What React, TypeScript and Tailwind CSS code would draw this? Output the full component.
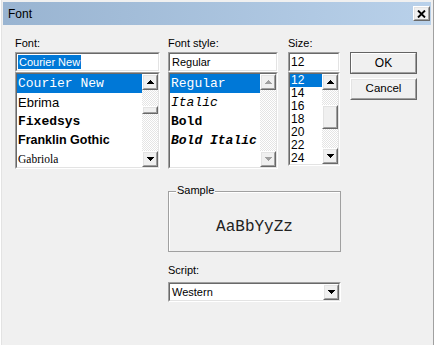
import React from 'react';

const sans = "[font-family:'Liberation_Sans',Arial,sans-serif]";
const mono = "[font-family:'Liberation_Mono','Courier_New',monospace]";

const Sunken = ({ className = '', inner = '', children }: { className?: string; inner?: string; children?: React.ReactNode }) => (
    <div className={`border border-t-[#a0a0a0] border-l-[#a0a0a0] border-b-white border-r-white ${className}`}>
        <div className={`h-full border border-t-[#696969] border-l-[#696969] border-b-[#e3e3e3] border-r-[#e3e3e3] bg-white ${inner}`}>
            {children}
        </div>
    </div>
);

const Raised = ({ className = '', children }: { className?: string; children?: React.ReactNode }) => (
    <div className={`border border-t-white border-l-white border-b-[#696969] border-r-[#696969] bg-[#f0f0f0] ${className}`}>
        <div className="flex h-full w-full items-center justify-center border border-t-[#e3e3e3] border-l-[#e3e3e3] border-b-[#a0a0a0] border-r-[#a0a0a0]">
            {children}
        </div>
    </div>
);

const Arrow = ({ dir, disabled }: { dir: 'up' | 'down'; disabled?: boolean }) => {
    const d = dir === 'up'
        ? 'M3 0h1v1h-1z M2 1h3v1h-3z M1 2h5v1h-5z M0 3h7v1h-7z'
        : 'M0 0h7v1h-7z M1 1h5v1h-5z M2 2h3v1h-3z M3 3h1v1h-1z';
    return (
        <svg width="7" height="4" viewBox="0 0 7 4" shapeRendering="crispEdges">
            <path d={d} fill={disabled ? '#a0a0a0' : '#000'} />
        </svg>
    );
};

const ScrollBar = ({ thumbTop, thumbHeight, disabled }: { thumbTop?: number; thumbHeight?: number; disabled?: boolean }) => (
    <div className="flex h-full w-[16px] shrink-0 flex-col">
        <Raised className="h-[16px] w-[16px] shrink-0"><Arrow dir="up" disabled={disabled} /></Raised>
        <div className="relative flex-1 bg-[repeating-conic-gradient(#ffffff_0_25%,#e4e4e4_0_50%)] bg-[length:2px_2px]">
            {thumbHeight ? (
                <div className="absolute left-0 w-[16px]" style={{ top: thumbTop, height: thumbHeight }}>
                    <Raised className="h-full w-full" />
                </div>
            ) : null}
        </div>
        <Raised className="h-[16px] w-[16px] shrink-0"><Arrow dir="down" disabled={disabled} /></Raised>
    </div>
);

export default function App() {
    return (
        <div className={`relative flex h-[345px] w-[434px] flex-col overflow-hidden bg-[#f0f0f0] text-black ${sans} shadow-[inset_1px_0_0_#ffffff,inset_2px_0_0_#e3e3e3,inset_-1px_0_0_#a0a0a0]`}>
            {/* title bar */}
            <div className="mx-[3px] mt-[2px] flex h-[23px] shrink-0 items-center justify-between bg-gradient-to-r from-[#99b4d1] to-[#b9d1ea] pl-[5px] pr-[1px]">
                <span className="text-[12px] leading-none">Font</span>
                <Raised className="h-[15px] w-[17px]">
                    <svg width="9" height="8" viewBox="0 0 9 8">
                        <path d="M1 0.5 L8 7.5 M8 0.5 L1 7.5" stroke="#000" strokeWidth="1.9" />
                    </svg>
                </Raised>
            </div>

            <div className="flex pl-[15px] pt-[12px] text-[11px]">
                {/* Font */}
                <div className="flex w-[145px] flex-col">
                    <div className="mb-[2px] h-[13px] leading-[13px]">Font:</div>
                    <Sunken className="h-[20px]" inner="flex items-center pl-[1px]">
                        <span className="bg-[#0078d7] px-[1px] leading-[14px] text-white">Courier New</span>
                    </Sunken>
                    <Sunken className="h-[97px]" inner="flex">
                        <div className="flex-1 overflow-hidden">
                            <div className={`flex h-[19px] items-center bg-[#0078d7] pl-[1px] text-[13px] text-white ${mono}`}>Courier New</div>
                            <div className="flex h-[19px] items-center pl-[1px] text-[13px]">Ebrima</div>
                            <div className={`flex h-[19px] items-center pl-[1px] text-[13px] font-bold ${mono}`}>Fixedsys</div>
                            <div className="flex h-[19px] items-center pl-[1px] text-[12.5px] font-bold">Franklin Gothic</div>
                            <div className="flex h-[19px] items-center pl-[1px] text-[11.5px] [font-family:'Liberation_Serif',serif]">Gabriola</div>
                        </div>
                        <ScrollBar thumbTop={16} thumbHeight={8} />
                    </Sunken>
                </div>

                {/* Font style */}
                <div className="ml-[8px] flex w-[110px] flex-col">
                    <div className="mb-[2px] h-[13px] leading-[13px]">Font style:</div>
                    <Sunken className="h-[20px]" inner="flex items-center pl-[2px]">
                        <span className="leading-[14px]">Regular</span>
                    </Sunken>
                    <Sunken className="h-[97px]" inner="flex">
                        <div className={`flex-1 overflow-hidden text-[13px] ${mono}`}>
                            <div className="flex h-[19px] items-center bg-[#0078d7] pl-[1px] text-white">Regular</div>
                            <div className="flex h-[19px] items-center pl-[1px] italic">Italic</div>
                            <div className="flex h-[19px] items-center pl-[1px] font-bold">Bold</div>
                            <div className="flex h-[19px] items-center pl-[1px] font-bold italic">Bold Italic</div>
                        </div>
                        <ScrollBar disabled />
                    </Sunken>
                </div>

                {/* Size */}
                <div className="ml-[10px] flex w-[52px] flex-col">
                    <div className="mb-[2px] h-[13px] leading-[13px]">Size:</div>
                    <Sunken className="h-[20px]" inner="flex items-center pl-[1px]">
                        <span className="text-[12px] leading-[14px]">12</span>
                    </Sunken>
                    <Sunken className="h-[94px]" inner="flex">
                        <div className="flex-1 overflow-hidden text-[12px] leading-[13px]">
                            <div className="h-[13px] bg-[#0078d7] pl-[1px] text-white">12</div>
                            {['14', '16', '18', '20', '22', '24'].map((s) => (
                                <div key={s} className="h-[13px] pl-[1px]">{s}</div>
                            ))}
                        </div>
                        <ScrollBar thumbTop={15} thumbHeight={24} />
                    </Sunken>
                </div>

                {/* Buttons */}
                <div className="ml-[10px] flex w-[67px] flex-col pt-[15px]">
                    <div className="h-[22px] border border-[#646464]">
                        <div className="flex h-full items-center justify-center border border-t-white border-l-white border-b-[#a0a0a0] border-r-[#a0a0a0] text-[12px]">
                            OK
                        </div>
                    </div>
                    <Raised className="mt-[4px] h-[22px]">
                        <span className="text-[11.5px]">Cancel</span>
                    </Raised>
                </div>
            </div>

            {/* Sample + Script */}
            <div className="ml-[168px] mt-[22px] flex w-[173px] flex-col text-[11px]">
                <div className="relative h-[61px] border border-[#a0a0a0] shadow-[inset_1px_1px_0_#ffffff]">
                    <span className="absolute left-[7px] top-[-8px] bg-[#f0f0f0] px-[1px] leading-[13px]">Sample</span>
                    <div className={`flex justify-center pt-[26px] text-[16px] leading-[18px] text-[#222] ${mono}`}>AaBbYyZz</div>
                </div>
                <div className="mb-[5px] mt-[12px] h-[13px] leading-[13px]">Script:</div>
                <Sunken className="h-[20px]" inner="flex items-center justify-between pl-[2px]">
                    <span className="leading-[14px]">Western</span>
                    <Raised className="h-[16px] w-[16px]"><Arrow dir="down" /></Raised>
                </Sunken>
            </div>
        </div>
    );
}
